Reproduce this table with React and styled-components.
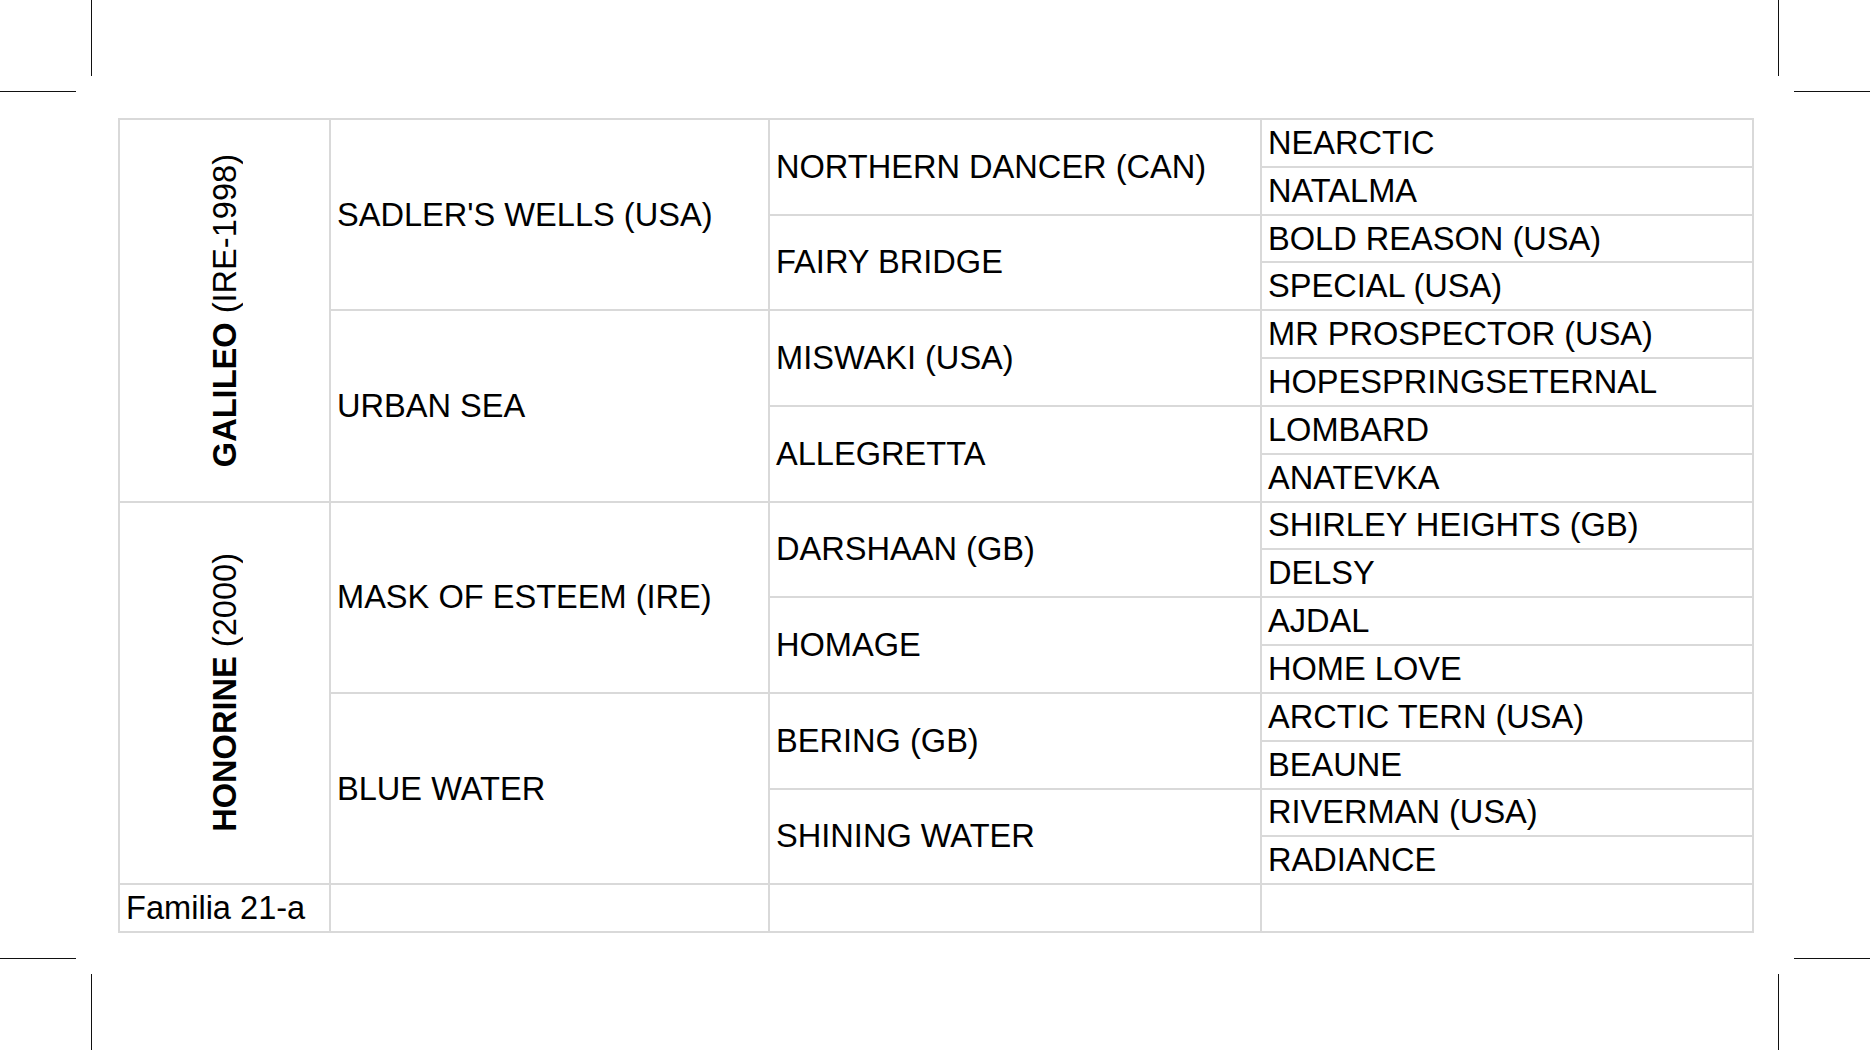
import React from 'react';
import styled, { createGlobalStyle } from 'styled-components';

const pedigree = [
    {
        name: 'GALILEO',
        note: '(IRE-1998)',
        parents: [
            {
                name: "SADLER'S WELLS (USA)",
                parents: [
                    { name: 'NORTHERN DANCER (CAN)', parents: ['NEARCTIC', 'NATALMA'] },
                    { name: 'FAIRY BRIDGE', parents: ['BOLD REASON (USA)', 'SPECIAL (USA)'] },
                ],
            },
            {
                name: 'URBAN SEA',
                parents: [
                    { name: 'MISWAKI (USA)', parents: ['MR PROSPECTOR (USA)', 'HOPESPRINGSETERNAL'] },
                    { name: 'ALLEGRETTA', parents: ['LOMBARD', 'ANATEVKA'] },
                ],
            },
        ],
    },
    {
        name: 'HONORINE',
        note: '(2000)',
        parents: [
            {
                name: 'MASK OF ESTEEM (IRE)',
                parents: [
                    { name: 'DARSHAAN (GB)', parents: ['SHIRLEY HEIGHTS (GB)', 'DELSY'] },
                    { name: 'HOMAGE', parents: ['AJDAL', 'HOME LOVE'] },
                ],
            },
            {
                name: 'BLUE WATER',
                parents: [
                    { name: 'BERING (GB)', parents: ['ARCTIC TERN (USA)', 'BEAUNE'] },
                    { name: 'SHINING WATER', parents: ['RIVERMAN (USA)', 'RADIANCE'] },
                ],
            },
        ],
    },
];

function CropMark({ side, edge }) {
    // a printer's corner mark: one vertical and one horizontal hairline
    const vx = side === 'left' ? 91.5 : 0.5;
    const hx1 = side === 'left' ? 0 : 16;
    const hx2 = side === 'left' ? 76 : 92;
    const vy1 = edge === 'top' ? 0 : 16;
    const vy2 = edge === 'top' ? 76 : 92;
    const hy = edge === 'top' ? 91.5 : 0.5;
    return (
        <svg width="92" height="92" viewBox="0 0 92 92">
            <line x1={vx} y1={vy1} x2={vx} y2={vy2} stroke="#111" strokeWidth="1" />
            <line x1={hx1} y1={hy} x2={hx2} y2={hy} stroke="#111" strokeWidth="1" />
        </svg>
    );
}

export default function App() {
    const cells = [];
    pedigree.forEach((sire, i) => {
        const base = i * 8;
        cells.push(
            <SireCell key={`s${i}`} $row={base + 1}>
                <Vertical>
                    <strong>{sire.name}</strong> {sire.note}
                </Vertical>
            </SireCell>
        );
        sire.parents.forEach((p, j) => {
            const r2 = base + j * 4;
            cells.push(
                <Cell key={`p${i}${j}`} $col={2} $row={r2 + 1} $span={4}>
                    {p.name}
                </Cell>
            );
            p.parents.forEach((g, k) => {
                const r3 = r2 + k * 2;
                cells.push(
                    <Cell key={`g${i}${j}${k}`} $col={3} $row={r3 + 1} $span={2}>
                        {g.name}
                    </Cell>
                );
                g.parents.forEach((gg, l) => {
                    cells.push(
                        <Cell key={`gg${i}${j}${k}${l}`} $col={4} $row={r3 + l + 1} $span={1}>
                            {gg}
                        </Cell>
                    );
                });
            });
        });
    });

    return (
        <>
            <GlobalStyle />
            <Page>
                <MarkBand>
                    <CropMark side="left" edge="top" />
                    <CropMark side="right" edge="top" />
                </MarkBand>
                <TableRow>
                    <Grid>
                        {cells}
                        <Cell $col={1} $row={17} $span={1}>Familia 21-a</Cell>
                        <Cell $col={2} $row={17} $span={1} />
                        <Cell $col={3} $row={17} $span={1} />
                        <Cell $col={4} $row={17} $span={1} />
                    </Grid>
                </TableRow>
                <MarkBand $bottom>
                    <CropMark side="left" edge="bottom" />
                    <CropMark side="right" edge="bottom" />
                </MarkBand>
            </Page>
        </>
    );
}

const GlobalStyle = createGlobalStyle`
    html, body {
        margin: 0;
        padding: 0;
        background: #ffffff;
    }
    body {
        font-family: 'Liberation Sans', Arial, sans-serif;
        color: #000;
    }
`;

const Page = styled.div`
    width: 1870px;
    height: 1050px;
    display: flex;
    flex-direction: column;
    background: #fff;
    overflow: hidden;
`;

const MarkBand = styled.div`
    display: flex;
    justify-content: space-between;
    align-items: ${(props) => (props.$bottom ? 'flex-end' : 'flex-start')};
    height: ${(props) => (props.$bottom ? '117px' : '118px')};

    svg {
        display: block;
    }
`;

const TableRow = styled.div`
    display: flex;
    padding: 0 116px 0 118px;
`;

const Grid = styled.div`
    display: grid;
    grid-template-columns: 209px 437px 490px 490px;
    grid-template-rows: repeat(17, 1fr);
    gap: 2px;
    padding: 2px;
    width: 1636px;
    height: 815px;
    box-sizing: border-box;
    background: #d9d9d9;
`;

const Cell = styled.div`
    grid-column: ${(props) => props.$col};
    grid-row: ${(props) => props.$row} / span ${(props) => props.$span};
    background: #fff;
    display: flex;
    align-items: center;
    padding: 0 6px;
    font-size: 32.6px;
    white-space: nowrap;
    overflow: hidden;
`;

const SireCell = styled(Cell).attrs({ $col: 1, $span: 8 })`
    justify-content: center;
    padding: 0;
`;

const Vertical = styled.span`
    writing-mode: vertical-rl;
    transform: rotate(180deg);
    font-size: 32.6px;
    white-space: nowrap;

    strong {
        font-weight: 700;
    }
`;
